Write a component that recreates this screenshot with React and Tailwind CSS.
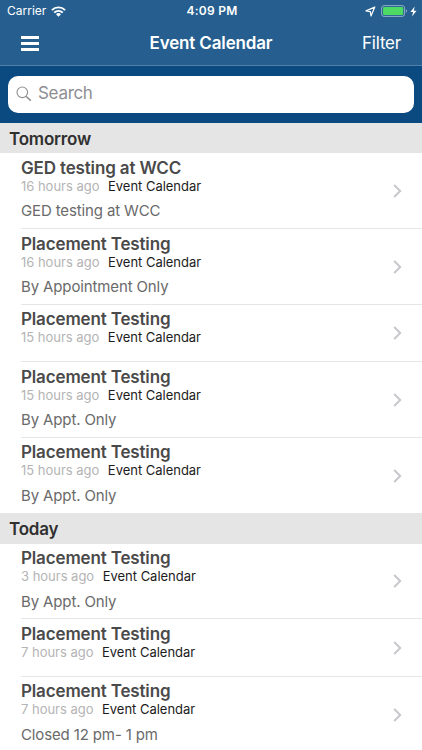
const sections = [
  {
    title: "Tomorrow",
    events: [
      { title: "GED testing at WCC", time: "16 hours ago", note: "GED testing at WCC" },
      { title: "Placement Testing", time: "16 hours ago", note: "By Appointment Only" },
      { title: "Placement Testing", time: "15 hours ago" },
      { title: "Placement Testing", time: "15 hours ago", note: "By Appt. Only" },
      { title: "Placement Testing", time: "15 hours ago", note: "By Appt. Only" },
    ],
  },
  {
    title: "Today",
    events: [
      { title: "Placement Testing", time: "3 hours ago", note: "By Appt. Only" },
      { title: "Placement Testing", time: "7 hours ago" },
      { title: "Placement Testing", time: "7 hours ago", note: "Closed 12 pm- 1 pm" },
    ],
  },
];

const StatusBar = () => (
  <div className="grid h-[22px] grid-cols-[1fr_auto_1fr] items-center pl-[7px] pr-[5px] text-[12px] leading-[22px]">
    <div className="flex items-center gap-[5px]">
      <span>Carrier</span>
      <svg width="15" height="11" viewBox="0 0 15 11" fill="none" stroke="white" strokeWidth="1.9">
        <path d="M0.9 4.1a9.4 9.4 0 0 1 13.2 0" />
        <path d="M3.2 6.6a6.1 6.1 0 0 1 8.6 0" />
        <path d="M7.5 10.7L5 8.2a3.6 3.6 0 0 1 5 0z" fill="white" stroke="none" />
      </svg>
    </div>
    <span className="font-semibold tracking-[0.25px]">4:09 PM</span>
    <div className="flex items-center justify-end">
      <svg width="11" height="11" viewBox="0 0 11 11" fill="none" stroke="white" strokeWidth="1.2" strokeLinejoin="round">
        <path d="M9.8 1.1L1 4.9l4.3 0.8L6 10z" />
      </svg>
      <svg className="ml-[5px]" width="27" height="12" viewBox="0 0 27 12">
        <rect x="0.6" y="0.6" width="23" height="10.8" rx="2.5" fill="none" stroke="#8fb0ca" />
        <rect x="2" y="2" width="20.2" height="8" rx="1.2" fill="#4cd964" />
        <path d="M24.9 4.2a2 2 0 0 1 0 3.6z" fill="#8fb0ca" />
      </svg>
      <svg className="ml-[2px]" width="7" height="11" viewBox="0 0 7 11" fill="white">
        <path d="M4.7 0.4L0.4 6.1h2.7L2 10.6l4.5-5.9H3.8z" />
      </svg>
    </div>
  </div>
);

const NavBar = () => (
  <div className="grid h-[43px] grid-cols-[1fr_auto_1fr] items-center pl-[21px] pr-[21px]">
    <div className="flex w-[18px] flex-col gap-[3px]">
      <span className="h-[3px] bg-white" />
      <span className="h-[3px] bg-white" />
      <span className="h-[3px] bg-white" />
    </div>
    <h1 className="text-[17px] font-semibold tracking-[-0.15px]">Event Calendar</h1>
    <span className="text-right text-[17px] tracking-[-0.2px]">Filter</span>
  </div>
);

const SearchBar = () => (
  <div className="h-[57.8px] border-t border-[#4f80a8] bg-[#0b4a80] px-[8px] pt-[9.5px]">
    <div className="flex h-[37.2px] items-center rounded-[10px] bg-white pl-[8px]">
      <svg width="16" height="16" viewBox="0 0 16 16" fill="none" stroke="#8e8e93" strokeWidth="1.1">
        <circle cx="6.3" cy="6.3" r="5.3" />
        <path d="M10 10.2l4.8 4.4" strokeWidth="1.5" />
      </svg>
      <span className="ml-[6px] text-[17px] tracking-[-0.3px] text-[#8e8e93]">Search</span>
    </div>
  </div>
);

const EventRow = ({ event, last }) => (
  <li className={event.note ? "h-[75.7px] pl-[21px]" : "h-[57.3px] pl-[21px]"}>
    <div
      className={
        last
          ? "flex h-full items-center justify-between pr-[20px]"
          : "flex h-full items-center justify-between border-b border-[#e6e6e8] pr-[20px]"
      }
    >
      <div className="h-full pt-[4.7px]">
        <h3 className="text-[17px] font-semibold leading-[20px] tracking-[-0.15px] text-[#4a4a4a]">
          {event.title}
        </h3>
        <p className="flex gap-[8.6px] text-[13px] leading-[16px] tracking-[-0.02px]">
          <span className="text-[#b4b4b4]">{event.time}</span>
          <span className="text-[#1c1c1c]">Event Calendar</span>
        </p>
        {event.note && (
          <p className="mt-[8.6px] text-[15px] leading-[18px] tracking-[-0.13px] text-[#6a6a6a]">{event.note}</p>
        )}
      </div>
      <svg className="mt-[1px]" width="9" height="14" viewBox="0 0 9 14" fill="none" stroke="#c7c7cc" strokeWidth="2">
        <path d="M1.2 1l6 6-6 6" />
      </svg>
    </div>
  </li>
);

export default function App() {
  return (
    <div className="h-[750px] w-[422px] overflow-hidden bg-white font-['Inter',sans-serif]">
      <header className="bg-[#265f8f] text-white">
        <StatusBar />
        <NavBar />
        <SearchBar />
      </header>
      {sections.map((section) => (
        <section key={section.title}>
          <h2 className="h-[30.4px] bg-[#e5e5e5] pl-[9px] text-[17px] font-semibold leading-[32px] tracking-[-0.2px] text-[#303030]">
            {section.title}
          </h2>
          <ul>
            {section.events.map((event, i) => (
              <EventRow key={i} event={event} last={i === section.events.length - 1} />
            ))}
          </ul>
        </section>
      ))}
    </div>
  );
}
